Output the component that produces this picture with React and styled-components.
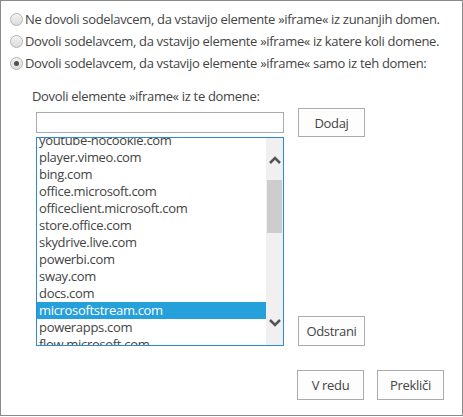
import React from "react";
import styled, { createGlobalStyle } from "styled-components";

const GlobalStyle = createGlobalStyle`
  html, body {
    margin: 0;
    padding: 0;
    background: #fff;
  }
  body {
    font-family: "Open Sans", "Noto Sans", sans-serif;
    color: #444;
  }
`;

const options = [
  "Ne dovoli sodelavcem, da vstavijo elemente »iframe« iz zunanjih domen.",
  "Dovoli sodelavcem, da vstavijo elemente »iframe« iz katere koli domene.",
  "Dovoli sodelavcem, da vstavijo elemente »iframe« samo iz teh domen:",
];

const domains = [
  "youtube-nocookie.com",
  "player.vimeo.com",
  "bing.com",
  "office.microsoft.com",
  "officeclient.microsoft.com",
  "store.office.com",
  "skydrive.live.com",
  "powerbi.com",
  "sway.com",
  "docs.com",
  "microsoftstream.com",
  "powerapps.com",
  "flow.microsoft.com",
];

const Chevron = ({ up }) => (
  <svg width="12" height="8" viewBox="0 0 12 8">
    <path
      d={up ? "M1 7 L6 2 L11 7" : "M1 1 L6 6 L11 1"}
      fill="none"
      stroke="#555"
      strokeWidth="2.5"
    />
  </svg>
);

const App = () => {
  const selected = 2;
  const selectedDomain = "microsoftstream.com";

  return (
    <>
      <GlobalStyle />
      <Dialog>
        <RadioGroup>
          {options.map((text, i) => (
            <RadioRow key={i}>
              <Radio checked={i === selected} />
              <span>{text}</span>
            </RadioRow>
          ))}
        </RadioGroup>

        <FieldLabel>Dovoli elemente »iframe« iz te domene:</FieldLabel>

        <EditGrid>
          <TextInput type="text" />
          <Button $h={29}>Dodaj</Button>
          <ListBox>
            <ListItems>
              {domains.map((d) => (
                <ListItem key={d} $selected={d === selectedDomain}>
                  {d}
                </ListItem>
              ))}
            </ListItems>
            <ScrollBar>
              <ArrowZone $top>
                <Chevron up />
              </ArrowZone>
              <Thumb />
              <ArrowZone>
                <Chevron />
              </ArrowZone>
            </ScrollBar>
          </ListBox>
          <BottomButton>Odstrani</BottomButton>
        </EditGrid>

        <Footer>
          <Button>V redu</Button>
          <Button>Prekliči</Button>
        </Footer>
      </Dialog>
    </>
  );
};

const Dialog = styled.div`
  width: 463px;
  height: 416px;
  box-sizing: border-box;
  border: 1px solid #8a8a8a;
  display: flex;
  flex-direction: column;
  font-size: 13px;
  letter-spacing: -0.32px;
`;

const RadioGroup = styled.div`
  display: flex;
  flex-direction: column;
  padding: 7px 0 0 9px;
`;

const RadioRow = styled.div`
  height: 22px;
  display: flex;
  align-items: center;
  gap: 2px;
  white-space: nowrap;
`;

const Radio = styled.span`
  position: relative;
  width: 13px;
  height: 13px;
  box-sizing: border-box;
  border-radius: 50%;
  border: 1px solid #b4b4b4;
  background: linear-gradient(#f3f3f3, #dcdcdc);
  flex-shrink: 0;

  &::after {
    content: "";
    display: ${(p) => (p.checked ? "block" : "none")};
    position: absolute;
    left: 3px;
    top: 3px;
    width: 5px;
    height: 5px;
    border-radius: 50%;
    background: #505050;
  }
`;

const FieldLabel = styled.div`
  margin-top: 13px;
  padding-left: 31px;
  line-height: 18px;
`;

const EditGrid = styled.div`
  display: grid;
  grid-template-columns: 248px 67px;
  grid-template-rows: 29px 209px;
  column-gap: 14px;
  align-items: center;
  margin-top: 3px;
  padding-left: 35px;
`;

const TextInput = styled.input`
  width: 248px;
  height: 21px;
  box-sizing: border-box;
  border: 1px solid #ababab;
  padding: 0 3px;
  font: inherit;
  outline: none;
`;

const Button = styled.button`
  width: 67px;
  height: ${(p) => p.$h || 30}px;
  box-sizing: border-box;
  border: 1px solid #ababab;
  background: #fdfdfd;
  color: #444;
  font-family: inherit;
  font-size: 13px;
  letter-spacing: -0.32px;
  padding: 0;
`;

const BottomButton = styled(Button)`
  align-self: end;
`;

const ListBox = styled.div`
  height: 209px;
  box-sizing: border-box;
  border: 1px solid #2b8bd6;
  display: flex;
  overflow: hidden;
  align-self: stretch;
`;

const ListItems = styled.div`
  flex: 1;
  overflow: hidden;
  padding-top: 1px;

  & > div:first-child {
    margin-top: -7px;
  }
`;

const ListItem = styled.div`
  height: 17px;
  line-height: 17px;
  padding-left: 2px;
  white-space: nowrap;
  background: ${(p) => (p.$selected ? "#26a0da" : "transparent")};
  color: ${(p) => (p.$selected ? "#fff" : "#444")};
`;

const ScrollBar = styled.div`
  width: 17px;
  background: #f0f0f0;
  display: flex;
  flex-direction: column;
  align-items: center;
`;

const ArrowZone = styled.div`
  height: ${(p) => (p.$top ? 42 : 111)}px;
  width: 100%;
  display: flex;
  justify-content: center;
  align-items: ${(p) => (p.$top ? "flex-start" : "flex-end")};
  padding: ${(p) => (p.$top ? "18px 0 0" : "0 0 18px")};
  box-sizing: border-box;
  flex: ${(p) => (p.$top ? "none" : "1")};
`;

const Thumb = styled.div`
  width: 15px;
  height: 53px;
  background: #cdcdcd;
`;

const Footer = styled.div`
  display: flex;
  justify-content: flex-end;
  gap: 13px;
  margin-top: 24px;
  padding-right: 18px;
`;

export default App;
